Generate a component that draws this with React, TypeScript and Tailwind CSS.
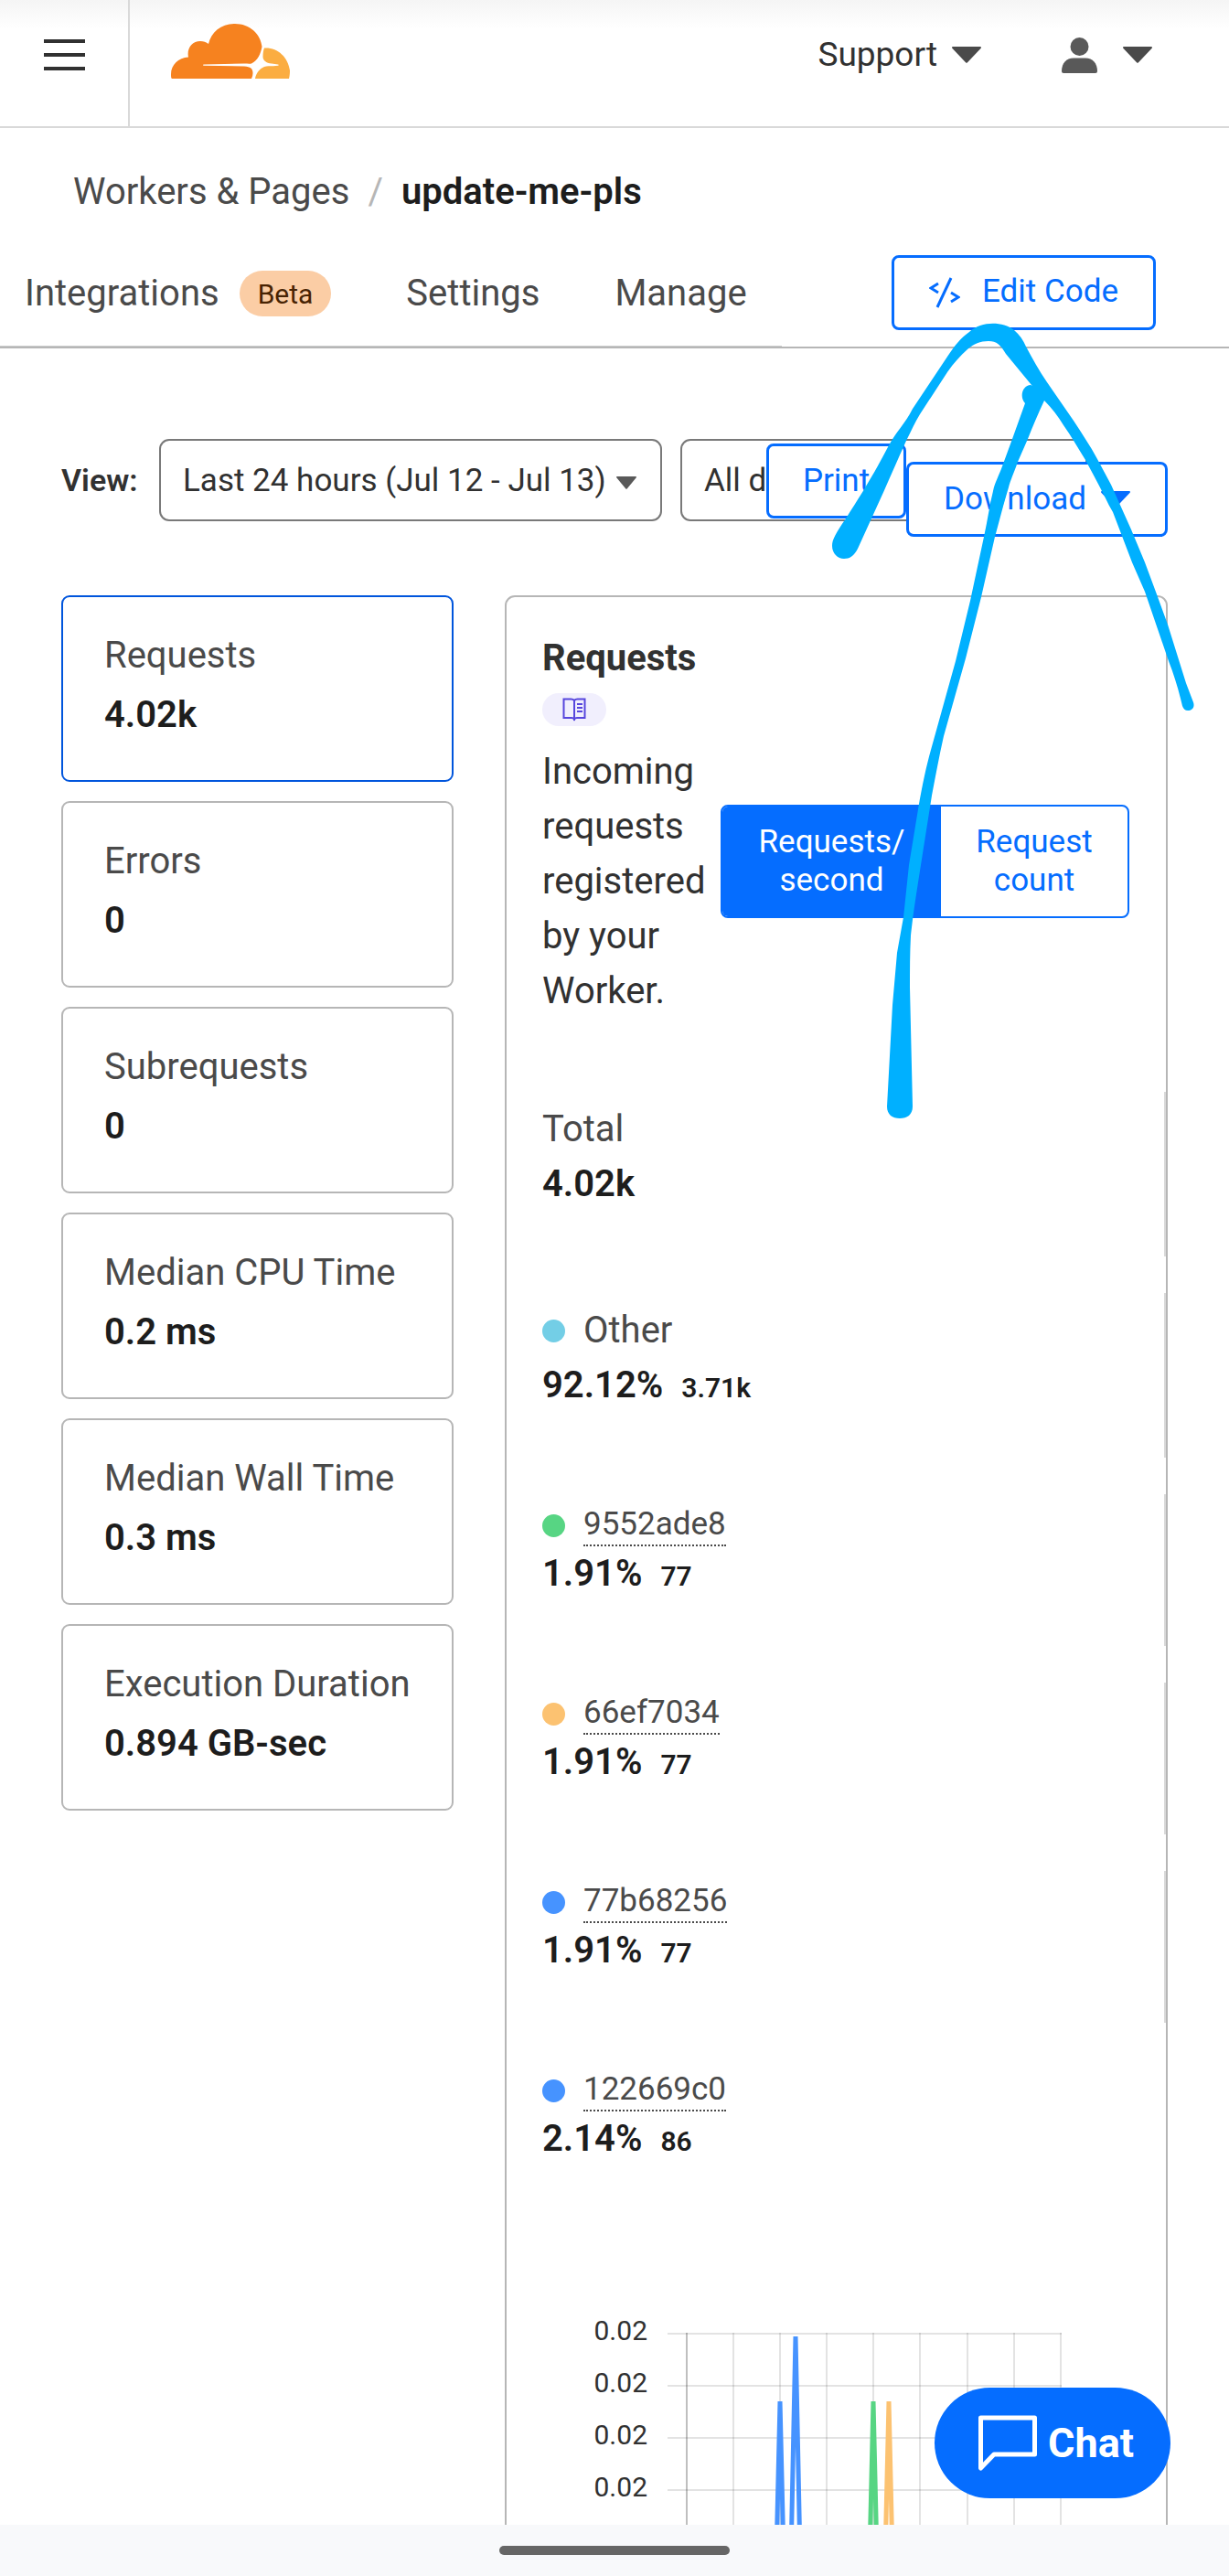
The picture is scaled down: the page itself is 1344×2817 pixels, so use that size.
const metrics = [
  { label: "Requests", value: "4.02k", active: true },
  { label: "Errors", value: "0" },
  { label: "Subrequests", value: "0" },
  { label: "Median CPU Time", value: "0.2 ms" },
  { label: "Median Wall Time", value: "0.3 ms" },
  { label: "Execution Duration", value: "0.894 GB-sec" },
]

const versions = [
  { id: "9552ade8", share: "1.91%", count: "77", dot: "bg-[#57d583]" },
  { id: "66ef7034", share: "1.91%", count: "77", dot: "bg-[#fcc271]" },
  { id: "77b68256", share: "1.91%", count: "77", dot: "bg-[#4693ff]" },
  { id: "122669c0", share: "2.14%", count: "86", dot: "bg-[#4693ff]", last: true },
]

function Caret({ className = "" }: { className?: string }) {
  return (
    <svg viewBox="0 0 32 18" className={className} fill="currentColor" preserveAspectRatio="none" aria-hidden="true">
      <path d="M1 0h30a1 1 0 0 1 .7 1.7L17 17.3a1.400 1.400 0 0 1-2 0L.3 1.700A1 1 0 0 1 1 0z" />
    </svg>
  )
}

function CloudLogo() {
  return (
    <svg viewBox="0 0 130 60" className="h-[60px] w-[130px]" aria-label="Cloudflare">
      <path
        fill="#f6821f"
        d="M88 60H1.500C0 60 0 58 0 55C0 45 8 37 19 36.500C17 27 23 19 32 19C35.500 19 38.500 20 41 22C44 9 55 0 70 0C86 0 98 11 99.500 25C98 33 95 40 88 43.500C86 44 83 43.500 80 43.500L36 44.500C34.500 44.600 34.500 45.600 36 45.700L80 46.500C87 47 89.500 49 89.500 54C89.500 56 89 58 88 60z"
      />
      <path
        fill="#fbad41"
        d="M102 26.500C116 25.500 128 36 130 51C130 54 129.800 57 129 60H92C93 54 97 49 102 47C105 46 108 46.300 112 46.200L117 45.700C118 45.500 118 44.700 117 44.500L110 43.500C104 43 100.500 40 100.500 36C100.500 32 101 29 102 26.500z"
      />
    </svg>
  )
}

function Header() {
  return (
    <header className="flex h-[140px] shrink-0 border-b-2 border-[#d9d9d9] bg-linear-to-b from-[#f5f5f5] to-white to-[32px]">
      <button aria-label="Menu" className="flex w-[142px] flex-col items-center gap-[11px] border-r-2 border-[#d9d9d9] pt-[43px]">
        <span className="h-1 w-[45px] bg-[#313131]" />
        <span className="h-1 w-[45px] bg-[#313131]" />
        <span className="h-1 w-[45px] bg-[#313131]" />
      </button>
      <a href="#" className="pt-[26px] pl-[45px]">
        <CloudLogo />
      </a>
      <div className="ml-auto flex h-[120px] items-center gap-[88px] pr-[84px]">
        <button className="flex items-center gap-4 text-[37px] text-[#313131]">
          Support
          <Caret className="h-[18px] w-8 text-[#4a4a4a]" />
        </button>
        <button aria-label="Account" className="flex items-center gap-7 text-[#595959]">
          <svg viewBox="0 0 39 39" className="size-[39px]" fill="currentColor" aria-hidden="true">
            <circle cx="19.500" cy="10" r="10" />
            <path d="M0 37C0 28 5 22.500 13 22.500h13C34 22.500 39 28 39 37a2 2 0 0 1-2 2H2a2 2 0 0 1-2-2z" />
          </svg>
          <Caret className="h-[18px] w-8 text-[#4a4a4a]" />
        </button>
      </div>
    </header>
  )
}

function Tabs() {
  return (
    <div className="mt-5 flex h-[121px] shrink-0 items-center justify-between border-b-2 border-[#b6b6b6] pr-20">
      <nav className="flex w-[855px] items-center gap-[82px] self-stretch border-b border-[#c9cbca] pt-1 pl-[27px] text-[40px] text-[#4a4a4a]">
        <a href="#" className="flex items-center gap-[22px]">
          Integrations
          <span className="flex h-[50px] items-center rounded-full bg-[#fbcda5] px-5 text-[30px] text-[#482303]">Beta</span>
        </a>
        <a href="#">Settings</a>
        <a href="#">Manage</a>
      </nav>
      <button className="flex h-[82px] items-center gap-6 rounded-lg border-3 border-[#056dff] bg-white px-[38px] text-[35px] text-[#056dff]">
        <svg viewBox="0 0 34 34" className="size-[34px]" fill="none" stroke="currentColor" strokeWidth="3" aria-hidden="true">
          <path d="M10 7L2 12l8 5M24 17l8 5-8 5M24 1L9 33" />
        </svg>
        Edit Code
      </button>
    </div>
  )
}

function Filters() {
  return (
    <div className="relative flex h-[90px] items-center text-[35px] text-[#313131]">
      <label htmlFor="range" className="w-[107px] text-[34px] font-semibold">
        View:
      </label>
      <div className="relative h-full w-[550px]">
        <select id="range" className="h-full w-full appearance-none rounded-[11px] border-2 border-[#797979] bg-white pt-0.5 pl-6">
          <option>Last 24 hours (Jul 12 - Jul 13)</option>
        </select>
        <Caret className="absolute top-[41px] right-7 h-[14px] w-[22px] text-[#595959]" />
      </div>
      <select aria-label="Deployments" className="ml-5 h-full w-[445px] appearance-none rounded-[11px] border-2 border-[#797979] bg-white pt-0.5 pl-6">
        <option>All deployments</option>
      </select>
      <div className="absolute top-[5px] right-0 flex items-start text-[#056dff]">
        <button className="h-[82px] w-[153px] rounded-lg border-3 border-[#056dff] bg-white">Print</button>
        <button className="mt-5 flex h-[82px] w-[286px] items-center justify-center gap-4 rounded-lg border-3 border-[#056dff] bg-white">
          Download
          <Caret className="h-[18px] w-8" />
        </button>
      </div>
    </div>
  )
}

function MetricCards() {
  return (
    <div className="flex flex-col gap-[21px]">
      {metrics.map((m) => (
        <button
          key={m.label}
          className={`h-[204px] shrink-0 rounded-[9px] border-2 pb-2 pl-[45px] text-left text-[40px] ${m.active ? "border-[#0055dc]" : "border-[#b6b6b6]"}`}
        >
          <div className="leading-[60px] text-[#4a4a4a]">{m.label}</div>
          <div className="mt-[5px] leading-[60px] font-semibold text-[#1d1d1d]">{m.value}</div>
        </button>
      ))}
    </div>
  )
}

function Legend() {
  return (
    <div className="flex flex-col gap-10 pl-10 text-[40px] leading-[60px] text-[#4a4a4a]">
      <div className="border-r-2 border-[#d9d9d9] pt-[11px] pb-[49px]">
        <div>Total</div>
        <div className="font-semibold text-[#1d1d1d]">4.02k</div>
      </div>
      <div className="border-r-2 border-[#d9d9d9] pt-[11px] pb-[49px]">
        <div className="flex items-center gap-5">
          <span className="size-[25px] rounded-full bg-[#73cee6]" />
          Other
        </div>
        <div className="flex items-baseline gap-5 font-semibold text-[#1d1d1d]">
          92.12%
          <span className="text-[30px] leading-[30px]">3.71k</span>
        </div>
      </div>
      {versions.map((v) => (
        <div key={v.id} className={`border-r-2 pt-[11px] pb-[49px] ${v.last ? "border-transparent" : "border-[#d9d9d9]"}`}>
          <div className="flex items-center gap-5 text-[35px] leading-[44px]">
            <span className={`size-[25px] rounded-full ${v.dot}`} />
            <span className="border-b-2 border-dotted border-[#4a4a4a]">{v.id}</span>
          </div>
          <div className="flex items-baseline gap-5 font-semibold text-[#1d1d1d]">
            {v.share}
            <span className="text-[30px] leading-[30px]">{v.count}</span>
          </div>
        </div>
      ))}
    </div>
  )
}

const rows = [35, 92, 149, 206]
const cols = [158, 209, 260, 311, 362, 413, 465, 516, 567]

function Chart() {
  return (
    <svg viewBox="0 0 600 280" className="mt-[98px] ml-[39px] h-[280px] w-[600px] shrink-0" role="img" aria-label="Requests per second">
      {rows.map((y) => (
        <g key={y}>
          <path d={`M137 ${y + 1}H568`} stroke="#000" strokeOpacity=".11" strokeWidth="2" />
          <text x="115" y={y + 8} textAnchor="end" fontSize="30" fill="#313131">
            0.02
          </text>
        </g>
      ))}
      {cols.map((x, i) => (
        <path key={x} d={`M${x} 35V280`} stroke="#000" strokeOpacity={i === 0 ? ".25" : ".11"} strokeWidth="2" />
      ))}
      <g fill="none" strokeWidth="5" strokeLinejoin="bevel">
        <path d="M256 280L260 110L264 280" stroke="#4693ff" />
        <path d="M272 280L277 39L282 280" stroke="#4693ff" />
        <path d="M358 280L362 110L366 280" stroke="#57d583" />
        <path d="M375 280L379 110L383 280" stroke="#fcc271" />
      </g>
    </svg>
  )
}

function RequestsPanel() {
  return (
    <section className="flex flex-col rounded-t-[11px] border-2 border-[#b6b6b6] pt-[37px] text-[#313131]">
      <div className="flex items-center justify-between pr-10 pl-[39px] text-[40px] leading-[60px]">
        <div className="w-[190px] pb-20">
          <h2 className="font-bold">Requests</h2>
          <a href="#" aria-label="Documentation" className="mt-2 mb-5 flex h-9 w-[70px] items-center justify-center rounded-full bg-[#f1effd]">
            <svg viewBox="0 0 26 26" className="size-[26px]" fill="none" stroke="#5746dd" strokeWidth="2" aria-hidden="true">
              <path d="M13 3C12 1.800 11 1.500 9.500 1.500H1.500V22H10c1.500 0 2.500.5 3 1.500.5-1 1.500-1.500 3-1.500h8.500V1.500h-8C15 1.500 14 1.800 13 3zM13 3v22M16 7h6M16 11h6M16 15h6" />
            </svg>
          </a>
          <p>Incoming requests registered by your Worker.</p>
        </div>
        <div className="flex h-[124px] w-[447px] shrink-0 overflow-hidden rounded-lg border-2 border-[#056dff] text-[35px] leading-[42px]">
          <button className="w-[239px] bg-[#056dff] px-8 text-white">
            Requests/
            <br />
            second
          </button>
          <button className="flex-1 px-8 text-[#056dff]">Request count</button>
        </div>
      </div>
      <div className="-ml-px">
        <Legend />
      </div>
      <Chart />
    </section>
  )
}

function Arrow() {
  return (
    <svg viewBox="900 340 420 900" className="pointer-events-none absolute top-[340px] right-6 h-[900px] w-[420px]" fill="#00b0ff" aria-hidden="true">
      <path d="M910 597C910 590 914 583 925 567C941 542 956 518 972 487C980 472 990 463 998 447L1036 390C1044 378 1050 370 1060 363C1073 351 1096 351 1109 361C1115 366 1119 372 1122 379C1129 392 1136 405 1145 418L1174 460C1183 474 1192 487 1200 502L1215 530L1237 579L1252 615L1265 650L1277 683L1297 747L1305 768C1307 774 1303 777 1299 777C1296 777 1294 775 1293 772C1289 755 1284 738 1278 723L1252 647L1238 615L1217 560L1213 553C1205 536 1196 520 1187 503C1179 490 1172 478 1163 465C1157 455 1150 446 1142 438L1128 421L1100 387C1094 377 1090 373 1081 373C1072 373 1065 376 1058 382C1050 389 1043 397 1036 407L1006 453C1001 461 996 472 991 482C978 511 966 539 953 567L938 600C934 608 929 611 923 611C916 611 910 605 910 597z" />
      <path d="M1127 421L1150 430L1142 438C1135 453 1129 467 1124 480L1113 505C1110 514 1105 525 1103 533C1098 549 1093 569 1088 587L1073 653L1056 720L1032 805C1027 827 1023 849 1019 870L1004 965C1001 984 998 1004 996 1023C995 1042 995 1061 995 1080L998 1210C998 1219 992 1223 984 1223C976 1223 970 1219 970 1210L976 1099L981 1042L988 1003L994 946L1004 885C1009 856 1013 838 1018 820L1045 723L1061 657L1076 587C1080 569 1082 553 1086 537C1088 527 1093 519 1096 510L1107 480L1121 441C1114 433 1119 421 1127 421z" />
    </svg>
  )
}

export default function App() {
  return (
    <div className="relative flex h-screen flex-col overflow-hidden bg-white font-[Roboto,sans-serif]">
      <Header />
      <div className="flex min-h-0 flex-1 flex-col overflow-hidden">
        <div className="flex items-center gap-5 pt-10 pl-20 text-[40px] leading-[60px]">
          <a href="#" className="text-[#4a4a4a]">Workers &amp; Pages</a>
          <span className="text-[#b6b6b6]">/</span>
          <span className="font-semibold text-[#1d1d1d]">update-me-pls</span>
        </div>
        <Tabs />
        <main className="px-[67px] pt-[99px]">
          <Filters />
          <div className="mt-[81px] grid grid-cols-[429fr_725fr] gap-14">
            <MetricCards />
            <RequestsPanel />
          </div>
        </main>
      </div>
      <Arrow />
      <button className="absolute right-16 bottom-[85px] flex h-[121px] w-[258px] items-center justify-center gap-3 rounded-full bg-[#056dff] pl-2 text-[45px] font-bold text-white">
        <svg viewBox="0 0 64 62" className="h-[62px] w-16" fill="none" stroke="currentColor" strokeWidth="5" strokeLinejoin="round" aria-hidden="true">
          <path d="M2.500 3H61.500V43H17L2.500 58z" />
        </svg>
        Chat
      </button>
      <footer className="flex h-14 shrink-0 items-center justify-center bg-[#f8f9fb]">
        <div className="h-[10px] w-[252px] rounded-full bg-[#666]" />
      </footer>
    </div>
  )
}
